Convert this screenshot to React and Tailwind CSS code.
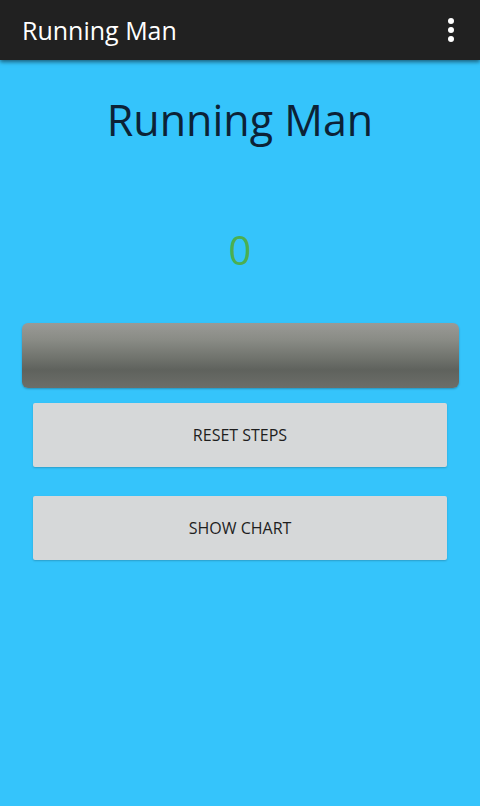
export default function App() {
  return (
    <div className="w-[480px] h-[806px] bg-[#35c4fb] flex flex-col overflow-hidden" style={{ fontFamily: '"Open Sans", "Noto Sans", sans-serif' }}>
      <div className="h-[60px] bg-[#212121] flex items-center justify-between pl-[22px] pr-[26px] shadow-[0_2px_4px_rgba(0,0,0,0.5)] relative z-10">
        <span className="text-white text-[25px] leading-none">Running Man</span>
        <div className="flex flex-col gap-[3px] items-center">
          <span className="w-[6px] h-[6px] rounded-full bg-white" />
          <span className="w-[6px] h-[6px] rounded-full bg-white" />
          <span className="w-[6px] h-[6px] rounded-full bg-white" />
        </div>
      </div>
      <div className="flex flex-col items-center">
        <div className="mt-[32px] text-[#0c2236] text-[43px] leading-[56px]">Running Man</div>
        <div className="mt-[76px] text-[#4caf50] text-[40px] leading-[52px]">0</div>
        <div className="mt-[47px] w-[437px] h-[65px] rounded-[6px] bg-[linear-gradient(to_bottom,#9a9a96_0%,#8a8c86_25%,#6f726c_55%,#5f625d_72%,#6c6e69_100%)] shadow-[0_1px_2px_rgba(0,0,0,0.25)]" />
        <button className="mt-[15px] w-[414px] h-[64px] bg-[#d6d8d9] rounded-[2px] text-[#1e1e1e] text-[16px] shadow-[0_1px_2px_rgba(0,0,0,0.2)]">RESET STEPS</button>
        <button className="mt-[29px] w-[414px] h-[64px] bg-[#d6d8d9] rounded-[2px] text-[#1e1e1e] text-[16px] shadow-[0_1px_2px_rgba(0,0,0,0.2)]">SHOW CHART</button>
      </div>
    </div>
  );
}
